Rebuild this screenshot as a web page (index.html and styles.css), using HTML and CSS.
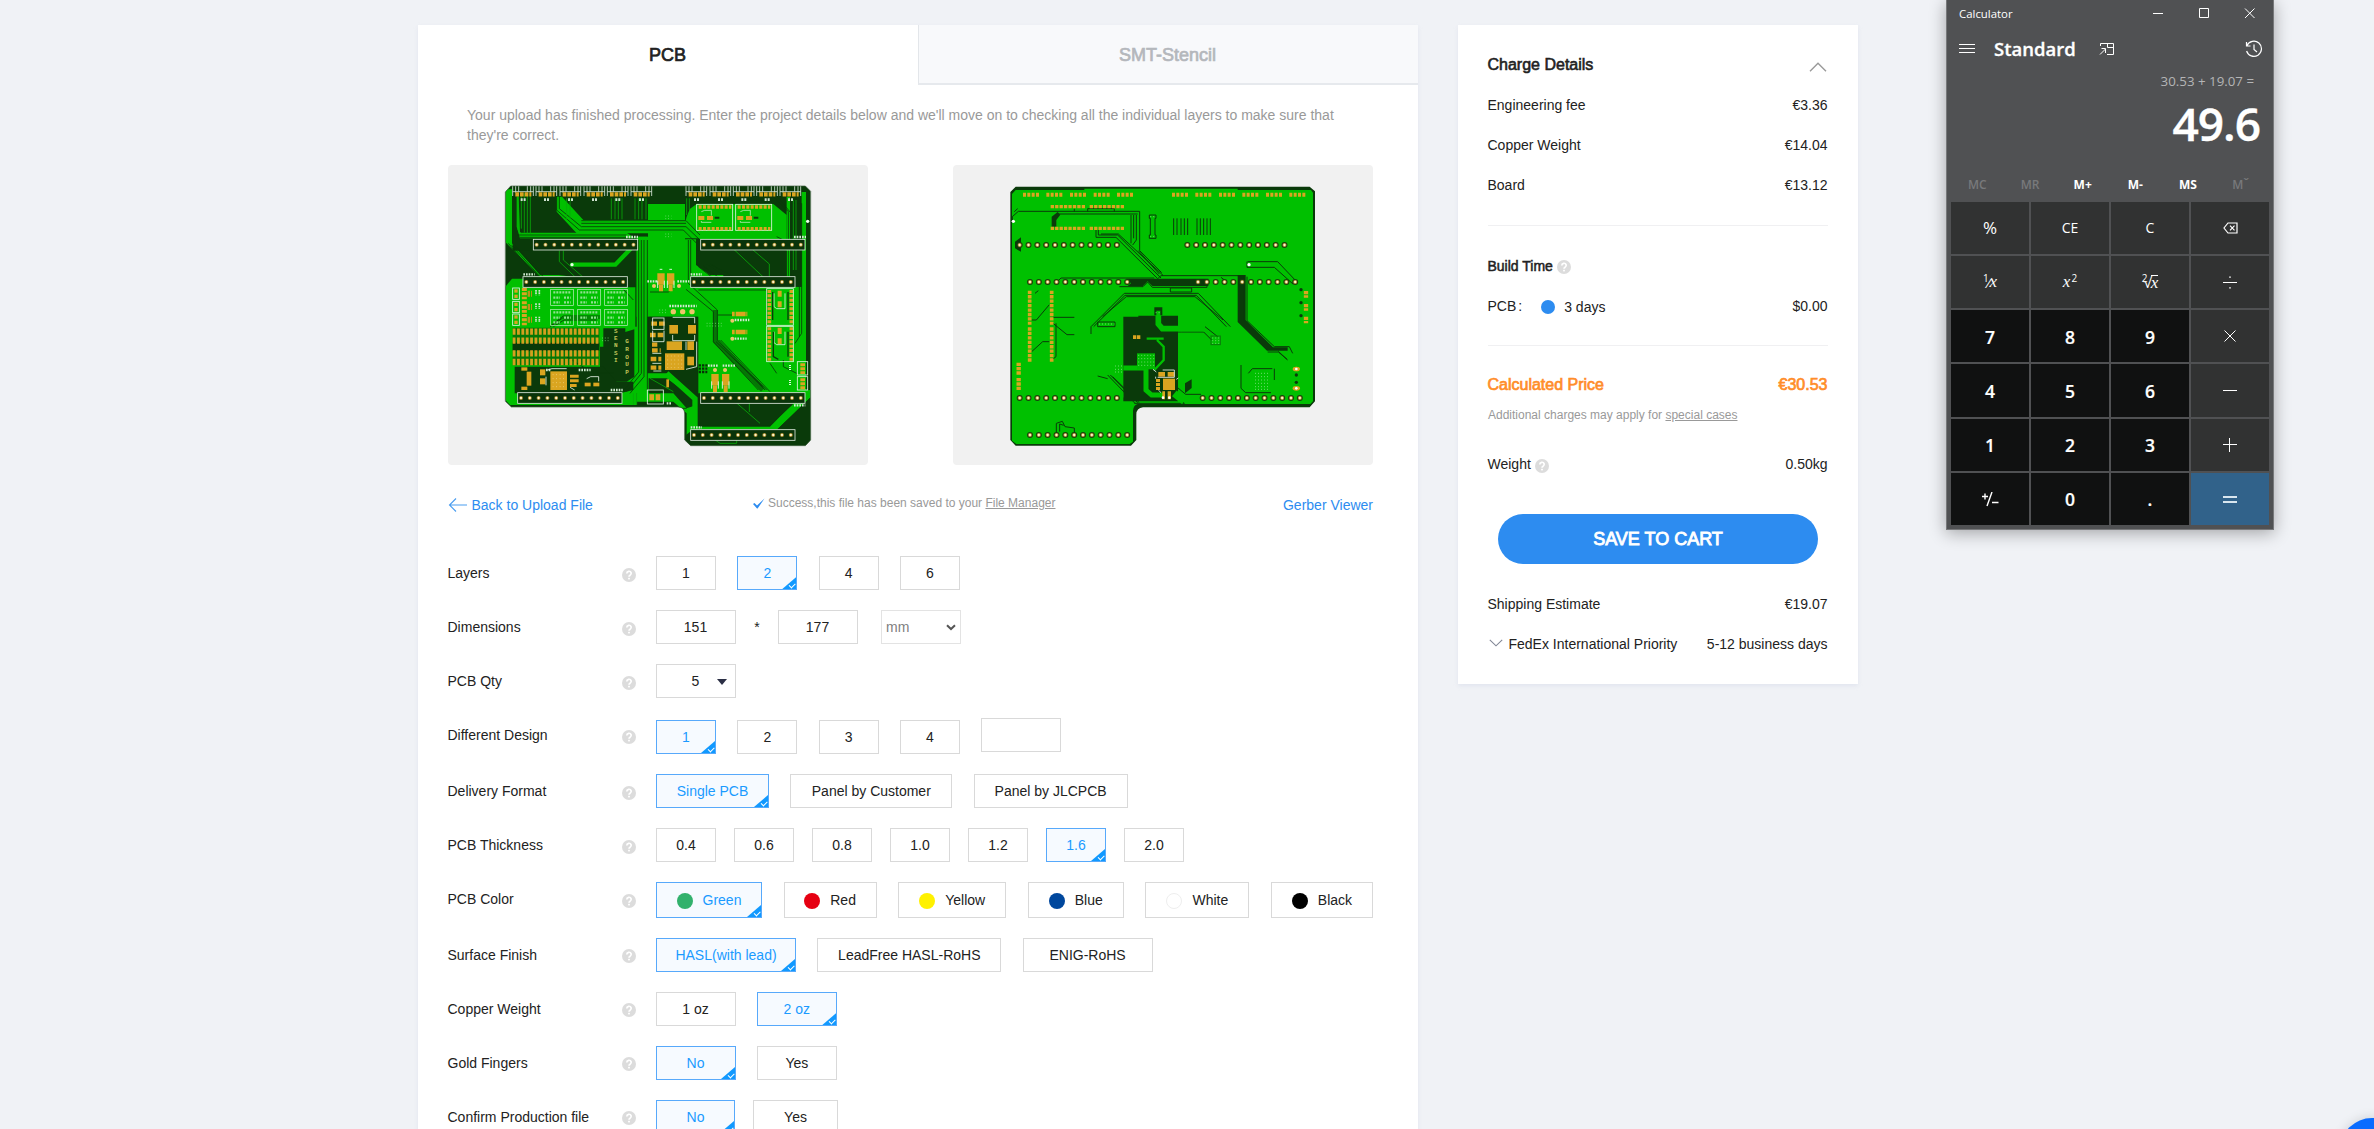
FILE: index.html
```html
<!DOCTYPE html>
<html lang="en">
<head>
<meta charset="utf-8">
<title>PCB order</title>
<link rel="stylesheet" href="styles.css">
</head>
<body>
<svg class="defs" aria-hidden="true">
  <symbol id="help" viewBox="0 0 14 14"><circle cx="7" cy="7" r="7" fill="#dcdcdc"/><path d="M4.8 5.4a2.2 2.1 0 1 1 3.3 1.8c-.8.5-1.1.8-1.1 1.6" fill="none" stroke="#fff" stroke-width="1.7"/><rect x="6.1" y="9.8" width="1.8" height="1.6" fill="#fff"/></symbol>
</svg>
<main class="page">
  <section class="card order">
    <nav class="tabs"><a class="tab active">PCB</a><a class="tab">SMT-Stencil</a></nav>
    <p class="intro">Your upload has finished processing. Enter the project details below and we'll move on to checking all the individual layers to make sure that they're correct.</p>
    <div class="boards">
      <svg class="board" viewBox="24 15 1260 900">
        <defs>
          <clipPath id="topshape"><path d="M212 78H1096L1112 94V840L1096 857H752L734 840V762Q734 741 714 741H214L196 724V96Z"/></clipPath>
          <g id="conn"><path d="M0 78V108M9 78V98M54 78V98M62 78V108M0 95H62M18 78V95M44 78V95" stroke="#d9e6d9" stroke-width="2.5" fill="none"/><path d="M8 103H56" stroke="#daa520" stroke-width="13" stroke-dasharray="11 3"/><path d="M24 119h16" stroke="#cfe3cf" stroke-width="8" stroke-dasharray="6 3"/></g>
          <g id="hdr"><rect x="-10" y="-16" width="313" height="32" fill="#0a340a" stroke="#dfeadf" stroke-width="2.5"/><path d="M0 0H292" stroke="#a88a2c" stroke-width="12" stroke-linecap="round" stroke-dasharray="0 26.4"/><path d="M0 0H292" stroke="#fff3cc" stroke-width="7" stroke-linecap="round" stroke-dasharray="0 26.4"/></g>
          <g id="label"><rect width="68" height="48" fill="none" stroke="#c6efc6" stroke-width="2"/><path d="M8 9H62M8 25H28M40 25H60M8 39H28M40 39H60" stroke="#8fe08f" stroke-width="7" stroke-dasharray="6 3"/></g>
          <g id="module"><rect width="108" height="78" fill="none" stroke="#dff5df" stroke-width="2.5"/><path d="M6 8H104M6 73H104" stroke="#daa520" stroke-width="10" stroke-dasharray="9 4"/><path d="M5 41H50" stroke="#daa520" stroke-width="12" stroke-dasharray="18 8"/><path d="M14 22L24 18H44V34M14 50V54H44" stroke="#dff5df" stroke-width="2" fill="none"/><path d="M54 40h14" stroke="#0a3a0a" stroke-width="6"/></g>
          <g id="jst"><rect x="0" y="0" width="20" height="34" fill="none" stroke="#e6f4e6" stroke-width="2.5"/><rect x="5" y="4" width="10" height="10" fill="#daa520"/><rect x="5" y="20" width="10" height="10" fill="#daa520"/><path d="M35 0V34" stroke="#daa520" stroke-width="15" stroke-dasharray="9 4"/><path d="M45 17H58" stroke="#b8941a" stroke-width="18" stroke-dasharray="7 3"/></g>
          <g id="part"><path d="M0 0V34" stroke="#daa520" stroke-width="22"/><path d="M0 34V54" stroke="#daa520" stroke-width="12"/><path d="M-10 22V44M10 22V44M-4 -12H4" stroke="#d6f2d6" stroke-width="3"/></g>
        </defs>
        <rect x="24" y="15" width="1260" height="900" fill="#f1f1f1"/>
        <g clip-path="url(#topshape)">
          <rect x="190" y="70" width="930" height="800" fill="#0a3a0a"/>
          <g fill="#00c000">
            <path d="M196 88H216V250L300 345H356L410 352V366H250V352L300 350L196 246Z"/>
            <path d="M196 380L216 356H250V382H586V500H590V230H622V700H590V735H210L196 720Z"/>
            <path d="M240 218H560L585 235H240L230 200V110H236Z"/>
            <path d="M350 110H366L430 180H738L780 235H735L715 220H410L350 155Z"/>
            <path d="M590 230H735V470H590Z"/><path d="M624 132H735V240H624Z"/>
            <path d="M745 150L770 132H1000L1040 165V238H780L735 190Z"/>
            <path d="M1040 110H1050V350H1040ZM1085 96H1098V700L1085 710Z"/>
            <path d="M735 238H768V315L810 345H850V380H1096V700H775V470H735Z"/>
            <path d="M626 640H680L770 716V800H990L1098 690H1112V712L1010 810H760L740 830V760L700 725H590V640Z"/>
          </g>
          <g fill="#0a3a0a"><path d="M768 272H1040V352H860L800 312H768Z"/><path d="M1053 130H1084V380H1053Z"/><path d="M490 505H556V516L583 508V650L560 665H515L480 620V560H490Z"/><path d="M626 470H773V690H730L680 636H626Z"/><path d="M626 655H680L770 720V735L740 745L700 700H626Z"/><path d="M218 548H478V572H218ZM224 620H490L530 665H580V690L540 700H224Z"/><path d="M775 732H1060L990 796H775Z"/><path d="M218 272H588V380H565V350H400L300 330L218 250Z"/><path d="M740 120H760L740 170ZM640 78H735V130H625Z"/><path d="M738 825L760 808H1012L1112 712V857H740Z"/></g>
          <path d="M396 314H526L580 258" fill="none" stroke="#00c000" stroke-width="13" stroke-linecap="round"/>
          <path d="M680 640L765 716V810" fill="none" stroke="#00c000" stroke-width="16"/>
          <g fill="none" stroke="#0a3a0a" stroke-width="2.5">
            <path d="M350 110V150L418 210H730L772 252M358 110V146L424 200H738L780 240M424 182H738L780 225M424 190H738M232 225H560M240 232H560"/>
            <path d="M604 240V640L560 695M612 240V650L570 700M596 240V636L550 692M622 240V690M745 240V370L832 450V540L975 690M752 240V366M738 388L820 455V545L955 690M828 545L968 680M836 540L980 690M842 540L990 695"/>
            <path d="M205 250L290 350M215 256L300 350M226 262L310 350M1000 110L1045 155V350M1010 108L1052 158V350M1085 130V520L1065 550M1078 380V530M775 320L850 378M790 318L860 370M810 312L880 350M1010 230L1040 245M775 390H980V500"/>
            <path d="M335 495L370 468H480M330 500L368 474H480M340 500L372 480H470M260 580L285 555H330M380 590L460 640H520M630 396H685L700 384M834 465H880M1030 600V620L1070 640M990 610L1010 640M550 388L580 420M740 745H700L680 735H590"/>
          </g>
          <path d="M826 450V545L968 690" fill="none" stroke="#0a3a0a" stroke-opacity=".55" stroke-width="14"/>
          <g fill="none" stroke="#08a808" stroke-width="2.5">
            <path d="M234 100V210L245 222M244 100V206M253 100V218M262 100V222M271 100V222M380 115V180M390 115V176M514 115V178M525 115V178M535 115V178M546 115V178M585 115V178M596 115V178M606 115V178M618 115V178M740 115V165M748 115V150M1060 120V330M1068 120V330"/>
            <path d="M358 272V305L420 365M370 272V300L430 352H560M875 262L990 370M930 262L988 312V350M875 716L960 790M928 716V756M630 655L700 695M580 700V735M590 700V735M820 836L840 850H890V836"/>
          </g>
          <g stroke="#7ee27e" stroke-width="2.5" stroke-dasharray="2.5 6"><path d="M676 168H694M676 176H694M676 222H694M676 230H694M658 450H680M658 458H680M800 490H846M800 498H846M486 534H508M486 542H508"/></g>
          <use href="#conn" x="218"/><use href="#conn" x="288"/><use href="#conn" x="360"/><use href="#conn" x="432"/><use href="#conn" x="502"/><use href="#conn" x="573"/><use href="#conn" x="738"/><use href="#conn" x="810"/><use href="#conn" x="880"/><use href="#conn" x="950"/><use href="#conn" x="1020"/>
          <use href="#hdr" x="290" y="254"/><use href="#hdr" x="792" y="254"/><use href="#hdr" x="259" y="366"/><use href="#hdr" x="762" y="366"/><use href="#hdr" x="243" y="714"/><use href="#hdr" x="792" y="714"/><use href="#hdr" x="762" y="825"/>
          <g stroke="#cfe8cf" stroke-width="7" stroke-dasharray="5 3"><path d="M558 231H594M1062 231H1098M250 343H284M752 343H786M512 690H548M1062 736H1096M752 802H786M804 617H834M848 617H886M622 364H654M712 364H748M688 438H770M884 480H928M884 536H920M416 630H452M318 630H332M680 730H696"/></g>
          <use href="#module" x="770" y="133"/><use href="#module" x="887" y="133"/>
          <use href="#label" x="332" y="388"/><use href="#label" x="413" y="388"/><use href="#label" x="494" y="388"/><use href="#label" x="332" y="448"/><use href="#label" x="413" y="448"/><use href="#label" x="494" y="448"/>
          <use href="#jst" x="218" y="384"/><use href="#jst" x="218" y="424"/><use href="#jst" x="218" y="462"/>
          <path d="M288 390V406M298 390V406M288 430V446M298 430V446M288 470V486M298 470V486" stroke="#cfe8cf" stroke-width="5" stroke-dasharray="5 2"/>
          <path d="M218 503H478V616H218Z" fill="#0a3a0a" fill-opacity=".55"/>
          <path d="M218 515H478M218 542H478M218 580H478M218 606H478" stroke="#d3a01f" stroke-width="19" stroke-dasharray="8.5 4.6"/>
          <g class="silk"><text x="522 522 522 522 522" y="519 539 561 584 607">SENSI</text><text x="556 556 556 556 556" y="550 573 596 619 641">GROUP</text></g>
          <use href="#part" x="663" y="340"/><use href="#part" x="692" y="340"/><use href="#part" x="825" y="642"/><use href="#part" x="857" y="642"/>
          <path d="M876 462H922M876 516H922" stroke="#daa520" stroke-width="14" stroke-dasharray="8 3 30 2"/>
          <g fill="#ecc66a"><circle cx="642" cy="378" r="6"/><circle cx="717" cy="378" r="6"/><circle cx="700" cy="455" r="8"/><circle cx="728" cy="455" r="8"/><circle cx="756" cy="455" r="8"/><circle cx="877" cy="482" r="6"/><circle cx="877" cy="536" r="6"/><circle cx="825" cy="630" r="6"/><circle cx="855" cy="630" r="6"/></g>
          <g fill="none" stroke="#daa520" stroke-width="11" stroke-dasharray="9 4"><path d="M988 390V495M1054 390V495M988 502V606M1054 502V606"/></g>
          <g fill="none" stroke="#dff5df" stroke-width="2.5"><rect x="980" y="386" width="80" height="110"/><rect x="980" y="499" width="80" height="106"/><path d="M1002 400V440L1010 446H1035V400M1002 515V548L1010 554H1035V515"/><rect x="1072" y="605" width="31" height="40"/><rect x="1072" y="650" width="31" height="40"/></g>
          <path d="M998 396V480M1044 396V480M1000 515V590L1015 598M1044 515V590" fill="none" stroke="#0a3a0a" stroke-width="4"/>
          <path d="M1019 392V410M1019 424V442M1019 503V522M1019 535V552" stroke="#daa520" stroke-width="12"/>
          <path d="M1088 610V642M1088 655V688" stroke="#daa520" stroke-width="14" stroke-dasharray="9 3"/>
          <path d="M1050 615V632M1050 660V678" stroke="#dff5df" stroke-width="6" stroke-dasharray="3 3"/>
          <g fill="#daa520"><rect x="688" y="495" width="26" height="26"/><rect x="744" y="495" width="24" height="26"/><rect x="680" y="544" width="46" height="26"/><rect x="742" y="544" width="20" height="26"/><rect x="675" y="580" width="58" height="50"/><rect x="742" y="590" width="20" height="26"/><rect x="331" y="634" width="50" height="56"/><path d="M390 644h26v9h-26zM390 658h26v9h-26zM390 672h20v9h-20z"/><rect x="300" y="628" width="16" height="18"/><rect x="300" y="655" width="16" height="18"/><rect x="260" y="635" width="14" height="42"/><rect x="434" y="668" width="18" height="11"/><rect x="460" y="668" width="18" height="11"/><rect x="244" y="622" width="18" height="10"/><rect x="244" y="680" width="18" height="10"/><rect x="679" y="658" width="8" height="24"/></g>
          <path d="M634 491H676M630 525H676M636 554H652M636 571H662M632 597H664M632 623H664" stroke="#daa520" stroke-width="13" stroke-dasharray="17 6"/>
          <g fill="none" stroke="#eaf6ea" stroke-width="2.5"><rect x="638" y="474" width="34" height="34"/><path d="M638 512V545H672V512M698 472H764V490M698 525V542H764V525M738 545V570M770 545V620L738 628M637 580H664M637 610H664M640 633H664"/><rect x="622" y="690" width="48" height="42"/><path d="M322 630L336 626H380M440 656L452 650H476V664M318 650V676M404 690L390 682"/></g>
          <path d="M628 712H662" stroke="#daa520" stroke-width="18" stroke-dasharray="14 5"/>
          <g stroke="#f1d483" stroke-width="2.5" stroke-dasharray="2.5 8"><path d="M682 588H730M682 600H730M682 612H730M682 623H730M338 644H380M338 656H380M338 668H380M338 680H380"/></g>
          <path d="M776 616H802M776 626H802M776 636H802" stroke="#073007" stroke-width="7" stroke-dasharray="7 3"/>
          <circle cx="396" cy="314" r="5" fill="#eaffea"/><circle cx="1103" cy="184" r="5" fill="#eaffea"/>
        </g>
        <path d="M212 78H1096L1112 94V840L1096 857H752L734 840V762Q734 741 714 741H214L196 724V96Z" fill="none" stroke="#3f5f3f" stroke-width="2"/>
      </svg>
      <svg class="board" viewBox="36 15 1260 900">
        <defs>
          <g id="pins"><path d="M0 0H292" stroke="#17400d" stroke-width="18" stroke-linecap="round" stroke-dasharray="0 26.5"/><path d="M0 0H292" stroke="#b3923c" stroke-width="12" stroke-linecap="round" stroke-dasharray="0 26.5"/><path d="M0 0H292" stroke="#fff3cc" stroke-width="7" stroke-linecap="round" stroke-dasharray="0 26.5"/></g>
          <path id="pads" d="M0 0H50" stroke="#daa520" stroke-width="12" stroke-dasharray="9 4"/>
        </defs>
        <rect x="36" y="15" width="1260" height="900" fill="#f1f1f1"/>
        <path d="M224 80H1106L1122 94V724L1106 742H606Q586 744 586 764V840L570 857H224L208 840V96Z" fill="#0a3a0a"/>
        <path d="M224 90H430V86H890V90H1110L1116 98V724L1108 732H590Q578 734 576 752V845L566 852H226L213 842V102Z" fill="#00c000"/>
        <path d="M547 470H592V467H711V724H547Z" fill="#0a3a0a"/>
        <path d="M555 356H802V378H634L620 364L606 378H560L570 370ZM890 345H914V480L996 562H1040V572H978L890 486Z" fill="#0a3a0a"/>
        <path d="M332 170L350 156L358 164L346 180V200H332ZM222 245L240 232V275L222 265ZM732 670L752 658V684L732 700Z" fill="#0a3a0a"/>
        <g fill="none" stroke="#0a3a0a" stroke-width="3">
          <path d="M214 180V170L232 154H596V272L662 338M350 162H590M592 272L655 342M586 165V240L575 255M578 165V235M570 165V250M220 155L230 146M400 154V146M440 154V146H520V154"/>
          <path d="M465 210V232H525L650 356M472 210V225H530L660 354M480 222H532L666 346M650 356L660 347H900M348 366L360 354H640M850 360L840 352"/>
          <path d="M450 522V500L550 400H772L868 500M458 500L552 406H766L856 500M485 470L556 410H762L846 480M535 380H606L620 366L634 382H798V370M688 384H752V396H688Z"/>
          <path d="M920 305H1010L1068 366M918 322H1000L1056 372M918 305V322M908 350V484L990 566M918 350V482L1000 560H1045L1055 580M980 576H1012L1038 598M1012 574L1040 600"/>
          <path d="M272 480H286L325 434M336 472H400M336 490L378 524H400M272 575L305 545H325M345 490V590L332 600M282 400L292 392M470 648L500 656M500 645L582 730M508 645L590 728M515 650L595 728M580 730H730L700 700M711 684L734 703H780M722 516H788L812 540M792 500L830 530M711 516H722"/>
          <path d="M900 615V685L914 698H990M922 640L934 626H994M1000 626V660M346 825V790L364 784L372 800L400 804V820M356 815V792L368 796M470 486H522V500H470ZM625 165H645V175H642V225H645V235H625V225H628V175H625Z"/>
          <path d="M698 175V225M708 175V225M720 175V225M730 175V225M740 175V225M768 175V225M778 175V225M788 175V225M798 175V225M808 175V225"/>
        </g>
        <g fill="none" stroke="#00c000">
          <path d="M652 450V492L664 506H790" stroke-width="17"/><path d="M547 624H615V690L632 705H668M540 705H547" stroke-width="15"/><path d="M617 536H668M648 540L668 560V600L640 630" stroke-width="7"/><path d="M700 700L730 724" stroke-width="22"/>
        </g>
        <rect x="588" y="580" width="54" height="48" fill="#00b800"/><path d="M640 442H664V466H658V452H646V466H640Z" fill="#0a3a0a"/><rect x="810" y="528" width="28" height="26" fill="none" stroke="#0a7a0a" stroke-width="3"/>
        <g stroke="#9be59b" stroke-width="2.5" stroke-dasharray="2.5 6.5"><path d="M592 586H640M592 596H640M592 606H640M592 616H640M942 640H986M942 650H986M942 660H986M942 670H986M942 680H986M942 688H986M522 618H545M522 628H545M522 636H545M814 534H836M814 542H836M814 550H836M474 492H520M628 170H646M628 230H646M644 458H662"/></g>
        <use href="#pads" x="246" y="104"/><use href="#pads" x="316" y="104"/><use href="#pads" x="387" y="104"/><use href="#pads" x="458" y="104"/><use href="#pads" x="528" y="104"/><use href="#pads" x="693" y="104"/><use href="#pads" x="763" y="104"/><use href="#pads" x="834" y="104"/><use href="#pads" x="904" y="104"/><use href="#pads" x="975" y="104"/><use href="#pads" x="1045" y="104"/>
        <path d="M329 140H432M446 140H549M329 205H432M446 205H549" stroke="#daa520" stroke-width="10" stroke-dasharray="10 3.3"/>
        <path d="M266 392V494M332 392V494M266 502V606M332 502V606" stroke="#daa520" stroke-width="11" stroke-dasharray="10 3.3"/>
        <path d="M233 608V646M233 654V692M1095 393V413M1095 432V452M1095 470V490" stroke="#daa520" stroke-width="13" stroke-dasharray="10 3"/>
        <use href="#pins" x="236" y="255"/><use href="#pins" x="739" y="255"/><use href="#pins" x="267" y="366"/><use href="#pins" x="771" y="366"/><use href="#pins" x="236" y="714"/><use href="#pins" x="785" y="714"/><use href="#pins" x="267" y="825"/>
        <g fill="#daa520"><rect x="666" y="656" width="36" height="34"/><rect x="652" y="636" width="20" height="14"/><rect x="680" y="636" width="20" height="14"/><path d="M645 657h12v9h-12zM645 669h12v9h-12zM645 681h12v9h-12zM664 694h8v24h-8zM680 694h10v24h-10zM576 526h10v11h-10zM588 526h10v11h-10z"/><ellipse cx="1066" cy="627" rx="11" ry="7"/><ellipse cx="1066" cy="685" rx="11" ry="7"/></g>
        <path d="M665 630H700V652H650M644 656V650M706 658L712 654M652 690L660 698M636 628L646 636" fill="none" stroke="#f0f0f0" stroke-width="2.5"/>
        <g fill="#fff"><circle cx="217" cy="184" r="5"/><circle cx="924" cy="314" r="5"/><circle cx="1066" cy="627" r="4"/><circle cx="1066" cy="685" r="4"/><circle cx="666" cy="713" r="4"/><circle cx="685" cy="713" r="4"/></g>
        <g fill="#0a3a0a"><circle cx="1066" cy="645" r="5"/><circle cx="1066" cy="667" r="5"/><circle cx="1080" cy="389" r="5"/><circle cx="1080" cy="428" r="5"/><circle cx="1080" cy="467" r="5"/></g>
      </svg>
    </div>
    <div class="links">
      <a class="back"><svg width="20" height="16" viewBox="0 0 20 16"><path d="M8 1.5L1.5 8L8 14.5M1.5 8H19" fill="none" stroke="#4a9df0" stroke-width="1.1"/></svg>Back to Upload File</a>
      <span class="saved"><svg width="12" height="11" viewBox="0 0 12 11"><path d="M0 6L1.5 5L4 7.4L11.5 0.5L4.6 10.5H4Z" fill="#2d8cf0"/></svg><span>Success,this file has been saved to your <u>File Manager</u></span></span>
      <a>Gerber Viewer</a>
    </div>
    <div class="form">
      <div class="row"><label>Layers</label><svg class="help"><use href="#help"/></svg><div class="opts"><b>1</b><b class="on">2</b><b>4</b><b>6</b></div></div>
      <div class="row"><label>Dimensions</label><svg class="help"><use href="#help"/></svg><div class="opts dims"><b class="w80">151</b><span>*</span><b class="w80">177</b><b class="w80 unit">mm<svg width="10" height="7" viewBox="0 0 10 7"><path d="M1 1.2L5 5L9 1.2" fill="none" stroke="#555" stroke-width="2"/></svg></b></div></div>
      <div class="row"><label>PCB Qty</label><svg class="help"><use href="#help"/></svg><div class="opts"><b class="w80 qty">5<i></i></b></div></div>
      <div class="row design"><label>Different Design</label><svg class="help"><use href="#help"/></svg><div class="opts"><b class="on">1</b><b>2</b><b>3</b><b>4</b><b class="w80 blank"></b></div></div>
      <div class="row"><label>Delivery Format</label><svg class="help"><use href="#help"/></svg><div class="opts"><b class="on w113">Single PCB</b><b class="w162">Panel by Customer</b><b class="w154">Panel by JLCPCB</b></div></div>
      <div class="row"><label>PCB Thickness</label><svg class="help"><use href="#help"/></svg><div class="opts tight"><b>0.4</b><b>0.6</b><b>0.8</b><b>1.0</b><b>1.2</b><b class="on">1.6</b><b>2.0</b></div></div>
      <div class="row colors"><label>PCB Color</label><svg class="help"><use href="#help"/></svg><div class="opts"><b class="on w106"><i class="dot green"></i>Green</b><b class="w93"><i class="dot red"></i>Red</b><b class="w108"><i class="dot yellow"></i>Yellow</b><b class="w96"><i class="dot blue"></i>Blue</b><b class="w104"><i class="dot white"></i>White</b><b class="w102"><i class="dot black"></i>Black</b></div></div>
      <div class="row high"><label>Surface Finish</label><svg class="help"><use href="#help"/></svg><div class="opts"><b class="on w140">HASL(with lead)</b><b class="w184">LeadFree HASL-RoHS</b><b class="w130">ENIG-RoHS</b></div></div>
      <div class="row high"><label>Copper Weight</label><svg class="help"><use href="#help"/></svg><div class="opts"><b class="w80">1 oz</b><b class="on w80">2 oz</b></div></div>
      <div class="row high"><label>Gold Fingers</label><svg class="help"><use href="#help"/></svg><div class="opts"><b class="on w80">No</b><b class="w80">Yes</b></div></div>
      <div class="row high"><label>Confirm Production file</label><svg class="help"><use href="#help"/></svg><div class="opts tight"><b class="on w79">No</b><b class="w85">Yes</b></div></div>
    </div>
  </section>

  <aside class="card summary">
    <div class="line title"><span>Charge Details</span><svg width="18" height="10" viewBox="0 0 18 10"><path d="M1 9.2L9 1.3L17 9.2" fill="none" stroke="#999" stroke-width="1.4"/></svg></div>
    <div class="line"><span>Engineering fee</span><span>€3.36</span></div>
    <div class="line"><span>Copper Weight</span><span>€14.04</span></div>
    <div class="line"><span>Board</span><span>€13.12</span></div>
    <hr>
    <div class="line build"><span>Build Time</span><svg class="help"><use href="#help"/></svg></div>
    <div class="line time"><span>PCB<em>:</em></span><span class="days"><i></i>3 days</span><span>$0.00</span></div>
    <hr class="second">
    <div class="line price"><span>Calculated Price</span><span>€30.53</span></div>
    <div class="note">Additional charges may apply for <u>special cases</u></div>
    <div class="line weight"><span>Weight<svg class="help"><use href="#help"/></svg></span><span>0.50kg</span></div>
    <button class="save">SAVE TO CART</button>
    <div class="line"><span>Shipping Estimate</span><span>€19.07</span></div>
    <div class="line"><span class="ship"><svg width="14" height="8" viewBox="0 0 14 8"><path d="M.8 .8L7 6.8L13.2 .8" fill="none" stroke="#808695" stroke-width="1.1"/></svg>FedEx International Priority</span><span>5-12 business days</span></div>
  </aside>
</main>

<section class="calc">
  <header class="caption"><span>Calculator</span>
    <svg width="103" height="12" viewBox="0 0 103 12" fill="none" stroke="#fff"><path d="M0 6.5H10M46.5 1.5h9v9h-9zM92 1.5L101.5 11M101.5 1.5L92 11"/></svg></header>
  <div class="mode">
    <svg width="16" height="10" viewBox="0 0 16 10"><path d="M0 .5H16M0 4.5H16M0 8.5H16" stroke="#fff"/></svg>
    <strong>Standard</strong>
    <svg class="pin" width="16" height="14" viewBox="0 0 16 14" fill="none" stroke="#fff"><path d="M1.5 4V1.5H14.5V12.5H8M8.5 1.5V5.5H14.5M1 12.5L6.5 7M2.5 6.5H6.5V11"/></svg>
    <svg class="history" width="18" height="18" viewBox="0 0 18 18" fill="none" stroke="#fff" stroke-width="1.2"><path d="M2 5.5A7.6 7.6 0 1 1 1.6 11M1.5 2V6H5.5M9 4.5V9.5L12 12"/></svg>
  </div>
  <div class="expr">30.53 + 19.07 =</div>
  <div class="result">49.6</div>
  <div class="memory"><span class="off">MC</span><span class="off">MR</span><span>M+</span><span>M-</span><span>MS</span><span class="off">M<sup>ˇ</sup></span></div>
  <div class="keys">
    <span class="fn pct">%</span><span class="fn">CE</span><span class="fn">C</span><span class="fn"><svg width="15" height="12" viewBox="0 0 15 12" fill="none" stroke="#fff"><path d="M5 1H14V11H5L1 6ZM7 3.7L11.5 8.3M11.5 3.7L7 8.3" stroke-width="1.2"/></svg></span>
    <span class="fn math frac"><sup>1</sup>⁄<i>x</i></span><span class="fn math"><i>x</i><sup>&#8202;2</sup></span><span class="fn math root"><sup>2</sup>√<i>x</i></span><span class="fn"><svg width="14" height="13" viewBox="0 0 14 13"><path d="M0 6.5H14M6.2 1.2H7.8M6.2 11.8H7.8" stroke="#fff" stroke-width="1.2"/></svg></span>
    <span>7</span><span>8</span><span>9</span><span class="fn"><svg width="12" height="12" viewBox="0 0 12 12"><path d="M.5 .5L11.5 11.5M11.5 .5L.5 11.5" stroke="#fff"/></svg></span>
    <span>4</span><span>5</span><span>6</span><span class="fn"><svg width="14" height="12" viewBox="0 0 14 12"><path d="M0 5.5H14" stroke="#fff"/></svg></span>
    <span>1</span><span>2</span><span>3</span><span class="fn"><svg width="14" height="14" viewBox="0 0 14 14"><path d="M0 6.5H14M6.5 0V14" stroke="#fff"/></svg></span>
    <span><svg width="17" height="15" viewBox="0 0 17 15"><path d="M0 4.5H6M3 1.5V7.5M10 0L5 14M10 10.5H16.5" stroke="#fff" stroke-width="1.4"/></svg></span><span>0</span><span>.</span><span class="eq"><svg width="14" height="9" viewBox="0 0 14 9"><path d="M0 2H14M0 7H14" stroke="#d9e6ef" stroke-width="1.8"/></svg></span>
  </div>
</section>
<div class="chat"></div>
</body>
</html>
```
FILE: styles.css
```css
*, *::before, *::after { box-sizing: border-box; }
body { margin: 0; height: 1129px; overflow: hidden; position: relative; background: #f0f2f6; color: #222; font: 14px/20px "Liberation Sans", Arial, sans-serif; }
.defs { position: absolute; width: 0; height: 0; }
.page { display: flex; align-items: flex-start; gap: 40px; padding: 25px 0 0 418px; }
.card { background: #fff; box-shadow: 0 2px 4px rgba(200, 208, 225, .35); }
.order { width: 1000px; height: 1140px; }

.tabs { display: flex; height: 60px; }
.tab { flex: 1; display: flex; align-items: center; justify-content: center; padding: 2px 2px 0 0; font-size: 18px; background: #f8f9fb; color: #b4b7bc; border-left: 1px solid #e3e6ea; border-bottom: 2px solid #e6e9ed; -webkit-text-stroke: .7px; }
.tab.active { background: #fff; color: #222; border-color: transparent; }
.intro { margin: 20px 50px 0 49px; height: 60px; color: #999; }
.boards { display: flex; justify-content: space-between; width: 925px; margin-left: 30px; }
.board { width: 420px; height: 300px; border-radius: 4px; }
.silk { fill: #c3c65a; font: bold 18px "Liberation Mono", monospace; }

.links { display: flex; align-items: center; height: 40px; margin: 20px 45px 0 30px; color: #2d8cf0; }
.back { display: flex; align-items: center; gap: 3.5px; width: 305px; }
.saved { display: flex; align-items: center; gap: 3px; flex: 1; font-size: 12px; color: #999; white-space: pre; padding-bottom: 4px; }

.form { display: grid; gap: 20px; margin: 31px 45px 0 30px; }
.row { display: grid; grid-template-columns: 174px 34px 717px; align-items: start; height: 34px; line-height: 34px; }
.row label { margin-left: -.5px; }
.row .help { margin-top: 12px; }
.row.high .help { margin-top: 11px; }
.help { width: 14px; height: 14px; }
.opts { display: flex; gap: 21.3px; }
.opts b { position: relative; display: flex; align-items: center; justify-content: center; flex: none; width: 60px; height: 34px; border: 1px solid #d9d9d9; font-weight: 400; line-height: 20px; }
.opts .on { color: #1b9aff; background: #f6faff; border-color: #57a9fb; }
.opts .on::before { content: ""; position: absolute; right: 0; bottom: 0; width: 14px; height: 12px; background: #1199ff; clip-path: polygon(100% 0, 100% 100%, 0 100%); }
.opts .on::after { content: ""; position: absolute; right: 1px; bottom: 3px; width: 6px; height: 3.5px; border: solid #fff; border-width: 0 0 1px 1px; transform: rotate(-45deg); }
.opts.tight { gap: 18px; }
.opts .w79 { width: 79px; } .opts .w80 { width: 80px; } .opts .w85 { width: 85px; } .opts .w93 { width: 93px; }
.opts .w96 { width: 96px; } .opts .w102 { width: 102px; } .opts .w104 { width: 104px; } .opts .w106 { width: 106px; }
.opts .w108 { width: 108px; } .opts .w113 { width: 113px; } .opts .w130 { width: 130px; } .opts .w140 { width: 140px; }
.opts .w154 { width: 154px; } .opts .w162 { width: 162px; } .opts .w184 { width: 184px; }
.opts .w80 { padding-right: 1px; }
.opts.dims { gap: 0; }
.dims span { width: 42px; text-align: center; }
.opts .unit { margin-left: 23px; justify-content: space-between; padding: 0 4px; border-color: #e3e3e3; color: #808080; }
.qty i { position: absolute; right: 8px; top: 14px; border: 5px solid transparent; border-top: 6px solid #2b2f45; border-bottom: 0; }
.row.design, .row.colors { height: 36px; }
.design b { margin-top: 2px; }
.design .blank { margin-top: 0; }
.colors .opts { justify-content: space-between; gap: 0; }
.colors b { height: 36px; }
.dot { width: 16px; height: 16px; border-radius: 50%; margin: 2px 10px 0 0; }
.green { background: #32b16c; } .red { background: #e60012; } .yellow { background: #fff100; }
.blue { background: #00479d; } .white { background: #fff; border: 1px solid #eee; } .black { background: #000; }

.summary { width: 400px; height: 659px; padding: 20px 30px; }
.line { display: flex; align-items: center; justify-content: space-between; height: 40px; margin: 0 .5px 0 -.5px; }
.title { font-size: 16px; -webkit-text-stroke: .6px; }
.title svg { margin: 4px 1px 0 0; }
hr { height: 1px; border: 0; margin: 20px 0; background: #f0f0f2; }
hr.second { margin: 19px 0; }
.build { justify-content: flex-start; gap: 4px; -webkit-text-stroke: .5px; }
.build .help { margin-top: 1px; }
.time { justify-content: flex-start; }
.time em { font-style: normal; margin-left: 2px; }
.time span:last-child { margin-left: auto; }
.days { display: flex; align-items: center; gap: 9px; margin: 1px 0 0 19px; }
.days i { width: 14px; height: 14px; border-radius: 50%; background: #2d8cf0; }
.price { color: #ff8d2a; font-size: 16px; -webkit-text-stroke: .7px; }
.note { font-size: 12px; color: #999; height: 39px; line-height: 20px; }
.weight span { display: flex; align-items: center; gap: 4px; }
.weight .help { margin-top: 4px; }
.save { display: block; width: 320px; height: 50px; margin: 30px auto 20px; border: 0; border-radius: 25px; background: #2d8cf0; color: #fff; font: 18px "Liberation Sans", Arial, sans-serif; -webkit-text-stroke: .9px; }
.ship { display: flex; align-items: center; gap: 6px; margin-left: 1px; }
.ship svg { margin-top: -2px; }

.calc { position: absolute; left: 1946px; top: 0; width: 328px; height: 530px; padding: 0 4px 4px; border: 1px solid #77787a; border-top: 0; background: #505153; color: #fff; box-shadow: 0 3px 16px rgba(0, 0, 0, .33); font-family: "Open Sans", "Noto Sans", sans-serif; }
.caption { display: flex; justify-content: space-between; align-items: center; height: 28px; padding: 0 13px 0 8px; font-size: 11.4px; }
.caption svg { margin-top: -3px; }
.mode { display: flex; align-items: center; height: 42px; padding: 0 6px 0 8px; }
.mode strong { margin-left: 19px; width: 105px; font-weight: 600; font-size: 18.5px; -webkit-text-stroke: .3px; }
.history { margin-left: auto; }
.expr { height: 24px; line-height: 23px; padding-right: 15px; text-align: right; color: #b4b5b6; font-size: 13.3px; }
.result { height: 74px; line-height: 58px; padding-right: 9px; text-align: right; font-size: 46px; font-weight: 600; letter-spacing: -1px; -webkit-text-stroke: .4px; }
.memory { display: grid; grid-template-columns: repeat(6, 1fr); height: 34px; line-height: 34px; padding-right: 2px; text-align: center; font-size: 12px; font-weight: 700; }
.memory .off { color: #78797b; font-weight: 600; }
.memory sup { line-height: 0; font-size: 13px; vertical-align: 1px; }
.keys { display: grid; grid-template-columns: repeat(4, 78px); grid-auto-rows: 52.17px; gap: 2px; }
.keys > span { display: flex; align-items: center; justify-content: center; background: #101111; font-size: 17.5px; font-weight: 600; padding-top: 1px; -webkit-text-stroke: .2px; }
.keys > .fn { background: #313232; font-size: 14px; font-weight: 400; padding-top: 0; -webkit-text-stroke: 0; }
.keys > .pct { font-size: 17px; }
.keys > .eq { background: #31628a; }
.math i { font: italic 17px "Liberation Serif", serif; }
.math sup { font-size: 10px; margin-top: -9px; line-height: 10px; }
.keys > .math { font-size: 15px; }
.frac sup { margin-right: -1px; }
.root sup { margin-right: -4px; }
.root i { border-top: 1px solid #fff; line-height: 13px; margin-left: -1px; }
.chat { position: absolute; left: 2340px; top: 1118px; width: 64px; height: 64px; border-radius: 50%; background: #0a6cff; box-shadow: 0 0 12px rgba(0, 0, 0, .15); }
```
